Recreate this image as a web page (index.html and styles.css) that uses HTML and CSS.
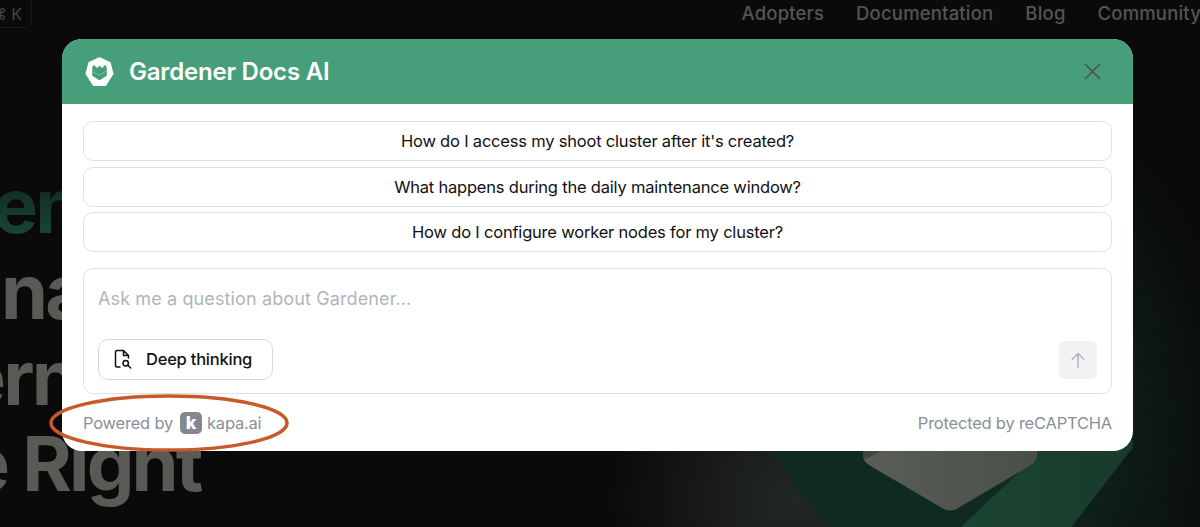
FILE: index.html
```html
<!DOCTYPE html>
<html lang="en">
<head>
  <meta charset="UTF-8" />
  <meta name="viewport" content="width=device-width, initial-scale=1.0" />
  <title>Gardener Docs AI</title>
  <link rel="stylesheet" href="styles.css">
</head>
<body>
  <div class="page">
    <header class="topbar">
      <div class="search-keys">⌘ K</div>
      <nav class="nav">
        <a>Adopters</a>
        <a>Documentation</a>
        <a>Blog</a>
        <a>Community</a>
      </nav>
    </header>
    <h1 class="hero">
      <span class="name">en</span>
      <span class="line-two">na</span>
      <span class="line-three">ern</span>
      <span class="line-four">e Right</span>
    </h1>
    <svg class="hero-art" viewBox="0 0 460 147">
      <defs>
        <linearGradient id="face" x1="0" y1="0" x2="1" y2="0">
          <stop offset="0" stop-color="#5b5d59" />
          <stop offset="1" stop-color="#475047" />
        </linearGradient>
        <linearGradient id="leaf" x1="0" y1="0" x2="1" y2="0">
          <stop offset="0" stop-color="#1b4432" />
          <stop offset="1" stop-color="#183a2c" />
        </linearGradient>
      </defs>
      <path d="M28 67H393L332 147H89Z" fill="#0f2b21" />
      <path d="M292 80L297 60H393V67L331 147H221Z" fill="url(#leaf)" />
      <path d="M123 60H297V75Q297 81 291 85L218 128Q210 133 202 128L129 85Q123 81 123 75Z" fill="url(#face)" />
      <path d="M123 60V78L126 79L143 70V60Z" fill="#3f493e" />
    </svg>
  </div>

  <div class="modal">
    <div class="modal-header">
      <svg class="logo" viewBox="0 0 28 28">
        <path d="M14 1.2L23.8 5.7L26.5 16.2L19.6 27H8.4L1.5 16.2L4.2 5.7Z" fill="#fff" stroke="#fff" stroke-width="2" stroke-linejoin="round" />
        <path d="M7 10L8.500 7.500L11.500 10.500L14 8.500L16.500 10.500L19.500 7.500L21 10V18L14 22.500L7 18Z" fill="#479e7b" />
        <path d="M8 14L13.500 17.500L20.500 13.500" fill="none" stroke="#8cc4ad" stroke-width="0.7" />
      </svg>
      <h2>Gardener Docs AI</h2>
      <button class="close" aria-label="Close">
        <svg viewBox="0 0 18 18"><path d="M1.500 1.500L16.500 16.500M16.500 1.500L1.500 16.500" /></svg>
      </button>
    </div>
    <div class="modal-body">
      <div class="questions">
        <button>How do I access my shoot cluster after it's created?</button>
        <button>What happens during the daily maintenance window?</button>
        <button>How do I configure worker nodes for my cluster?</button>
      </div>
      <div class="ask">
        <div class="placeholder">Ask me a question about Gardener...</div>
        <div class="ask-actions">
          <button class="deep">
            <svg viewBox="0 0 18 20">
              <path d="M6 18H3Q1.500 18 1.500 16.500V3Q1.500 1.500 3 1.500H9.500L14.500 6.500V9M9.500 1.500V6.500H14.500" />
              <circle cx="11.700" cy="14.200" r="2.700" />
              <path d="M13.700 16.200L16.700 19" />
            </svg>
            Deep thinking
          </button>
          <button class="send" aria-label="Send">
            <svg viewBox="0 0 14 16"><path d="M7 15V1.500M1.200 7.300L7 1.500L12.800 7.300" /></svg>
          </button>
        </div>
      </div>
      <div class="modal-footer">
        <div class="powered">Powered by <span class="kapa-logo">k</span> kapa.ai</div>
        <div>Protected by reCAPTCHA</div>
      </div>
    </div>
  </div>

  <svg class="highlight" viewBox="0 0 240 58">
    <ellipse cx="120" cy="29" rx="118" ry="27" />
  </svg>
</body>
</html>
```
FILE: styles.css
```css
body {
  margin: 0;
  font-family: Inter, 'Liberation Sans', sans-serif;
  background-color: #0a0a0a;
  color: #111;
}
button {
  font-family: inherit;
  margin: 0;
  padding: 0;
  border: none;
  background: none;
  cursor: pointer;
}
.page {
  position: relative;
  height: 527px;
  overflow: hidden;
  background:
    radial-gradient(ellipse 240px 340px at 1000px 430px, #0f2b21 0%, rgba(14, 34, 27, 0.8) 50%, transparent 100%),
    radial-gradient(ellipse 190px 190px at 800px 500px, #252a26 0%, transparent 100%),
    #0a0a0a;
}
.topbar {
  display: flex;
  justify-content: space-between;
  height: 28px;
}
.search-keys {
  box-sizing: border-box;
  width: 36px;
  height: 28px;
  margin-left: -4px;
  padding-right: 9px;
  border: 1px solid #171717;
  border-top: none;
  border-radius: 0 0 5px 5px;
  color: #454545;
  font-size: 16px;
  line-height: 29px;
  display: flex;
  justify-content: flex-end;
  white-space: nowrap;
}
.nav {
  display: flex;
  gap: 32px;
  margin-right: -1px;
  color: #555;
  font-size: 18.5px;
  font-weight: 500;
  letter-spacing: 0.18px;
  line-height: 27px;
}
.hero {
  margin: 135px 0 0;
  color: #595956;
  font-size: 75.5px;
  font-weight: 700;
  line-height: 86px;
  letter-spacing: -2.8px;
  white-space: nowrap;
}
.hero span {
  display: block;
}
.hero .name {
  margin-left: -7px;
  color: transparent;
  background: linear-gradient(#12291f 20%, #184434 80%);
  background-clip: text;
  -webkit-background-clip: text;
}
.hero .line-two {
  margin-left: 1px;
}
.hero .line-three {
  margin-left: -39px;
}
.hero .line-four {
  margin-left: -35px;
}
.hero-art {
  position: absolute;
  right: 0;
  bottom: 0;
  width: 460px;
  height: 147px;
}
.modal {
  position: absolute;
  top: 39px;
  left: 62px;
  width: 1071px;
  height: 412px;
  border-radius: 20px;
  background: #fff;
  overflow: hidden;
}
.modal-header {
  display: flex;
  align-items: center;
  box-sizing: border-box;
  height: 65px;
  padding: 0 32px 0 23px;
  background: #479e7b;
}
.logo {
  width: 29px;
  height: 29px;
}
.modal-header h2 {
  flex: 1;
  margin: 0 0 0 15px;
  color: #fff;
  font-size: 24px;
  font-weight: 600;
  letter-spacing: -0.2px;
}
.close {
  display: flex;
}
.close svg {
  width: 17px;
  height: 17px;
  fill: none;
  stroke: #4a5c58;
  stroke-width: 1.8;
  stroke-linecap: round;
}
.modal-body {
  padding: 17px 21px 0;
}
.questions {
  display: flex;
  flex-direction: column;
  gap: 5.5px;
}
.questions button {
  box-sizing: border-box;
  height: 40px;
  border: 1.5px solid #dfe2e5;
  border-radius: 10px;
  color: #111;
  font-size: 16.5px;
  letter-spacing: -0.2px;
}
.ask {
  box-sizing: border-box;
  display: flex;
  flex-direction: column;
  justify-content: space-between;
  height: 126px;
  margin-top: 16px;
  padding: 17px 14px 13px;
  border: 1px solid #dfe2e5;
  border-radius: 10px;
}
.placeholder {
  color: #b0b5bb;
  font-size: 18px;
  line-height: 26px;
  letter-spacing: 0.12px;
}
.ask-actions {
  display: flex;
  align-items: center;
  justify-content: space-between;
}
.deep {
  box-sizing: border-box;
  display: flex;
  align-items: center;
  gap: 14px;
  width: 175px;
  height: 41px;
  padding: 0 0 1px 15px;
  border: 1px solid #d6d9dd;
  border-radius: 10px;
  color: #111;
  font-size: 16.5px;
  font-weight: 500;
  letter-spacing: -0.23px;
  white-space: nowrap;
}
.deep svg {
  width: 18px;
  height: 20px;
  fill: none;
  stroke: #111;
  stroke-width: 1.5;
  stroke-linecap: round;
  stroke-linejoin: round;
}
.send {
  display: flex;
  align-items: center;
  justify-content: center;
  width: 38px;
  height: 38px;
  border-radius: 5px;
  background: #f1f2f4;
}
.send svg {
  width: 14px;
  height: 16px;
  fill: none;
  stroke: #b2b5b9;
  stroke-width: 1.5;
  stroke-linecap: round;
  stroke-linejoin: round;
}
.modal-footer {
  display: flex;
  align-items: center;
  justify-content: space-between;
  height: 58px;
  color: #8a9097;
  font-size: 16.5px;
  letter-spacing: -0.22px;
}
.powered {
  display: flex;
  align-items: center;
}
.kapa-logo {
  width: 22px;
  height: 22px;
  margin: 0 5px 0 7px;
  border-radius: 5px;
  background: #83878f;
  color: #fff;
  font-size: 18px;
  font-weight: 800;
  line-height: 21px;
  text-align: center;
}
.highlight {
  position: absolute;
  top: 394px;
  left: 49px;
  width: 240px;
  height: 58px;
  fill: none;
  stroke: #c7592b;
  stroke-width: 3.5;
}
```
